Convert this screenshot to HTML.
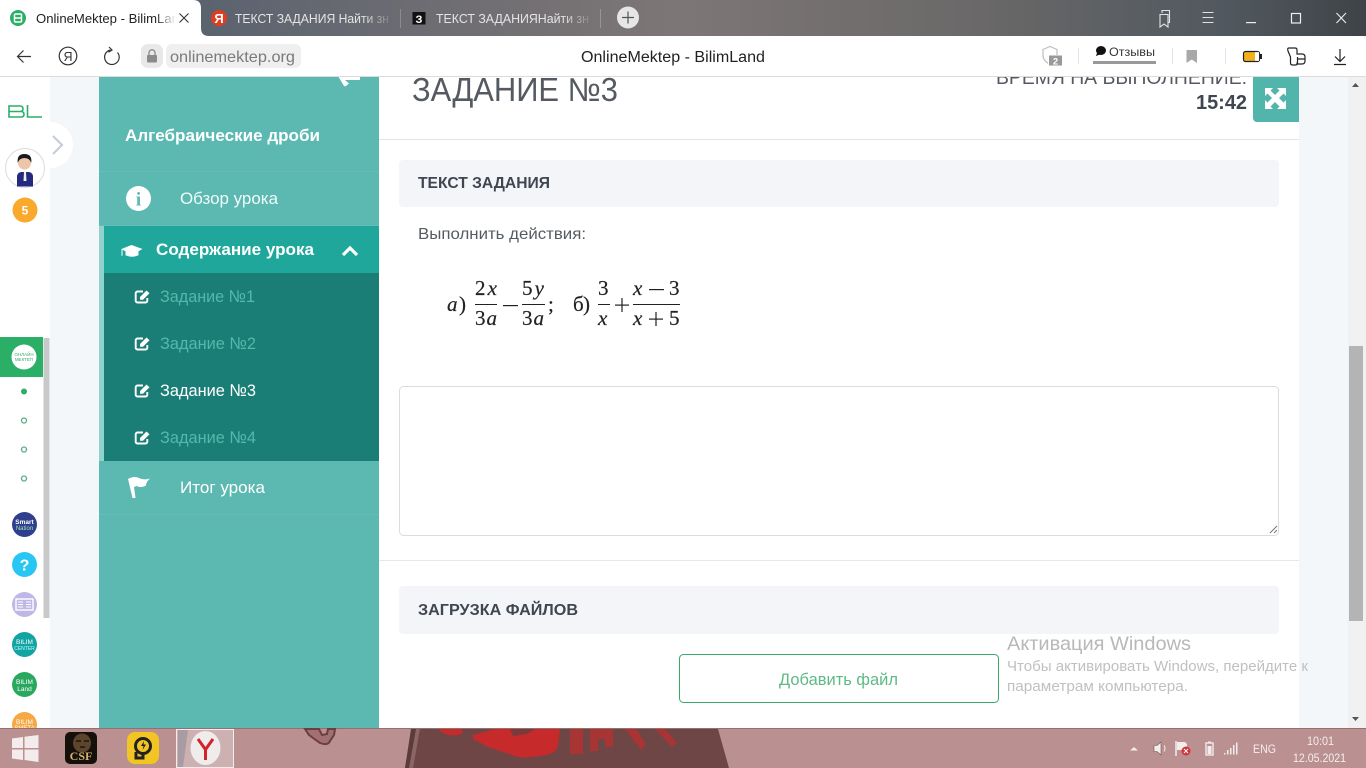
<!DOCTYPE html>
<html lang="ru">
<head>
<meta charset="utf-8">
<title>OnlineMektep - BilimLand</title>
<style>
html,body{margin:0;padding:0;width:1366px;height:768px;overflow:hidden;background:#fff}
svg{display:block;position:absolute;left:0;top:0}
text{font-family:"Liberation Sans","DejaVu Sans",sans-serif;white-space:pre}
.m text{font-family:"Liberation Serif","DejaVu Serif",serif;fill:#222;font-size:21px;stroke:#222;stroke-width:.2px}
.m .i{font-style:italic}
</style>
</head>
<body>
<svg width="1366" height="768" viewBox="0 0 1366 768" xmlns="http://www.w3.org/2000/svg">
<defs>
<linearGradient id="top" x1="0" x2="1" y1="0" y2="0">
<stop offset="0" stop-color="#4a5a6c"/><stop offset=".3" stop-color="#6c6c72"/><stop offset=".5" stop-color="#7d7676"/><stop offset=".72" stop-color="#6a6868"/><stop offset=".9" stop-color="#50585f"/><stop offset="1" stop-color="#3f4347"/>
</linearGradient>
<linearGradient id="ft0" gradientUnits="userSpaceOnUse" x1="155" x2="176" y1="0" y2="0"><stop offset="0" stop-color="#222"/><stop offset="1" stop-color="#222" stop-opacity="0"/></linearGradient>
<linearGradient id="ft1" gradientUnits="userSpaceOnUse" x1="362" x2="390" y1="0" y2="0"><stop offset="0" stop-color="#e4e4e4"/><stop offset="1" stop-color="#e4e4e4" stop-opacity=".15"/></linearGradient>
<linearGradient id="ft2" gradientUnits="userSpaceOnUse" x1="562" x2="590" y1="0" y2="0"><stop offset="0" stop-color="#e4e4e4"/><stop offset="1" stop-color="#e4e4e4" stop-opacity=".15"/></linearGradient>
<clipPath id="clipMain"><rect x="0" y="76" width="1366" height="652"/></clipPath>
<g id="edit">
<path d="M9 3H3.500A1.800 1.800 0 0 0 1.700 4.800v7.400A1.800 1.800 0 0 0 3.500 14h8a1.800 1.800 0 0 0 1.800-1.800V9.500" fill="none" stroke="currentColor" stroke-width="1.900"/>
<path d="M6 8.500L12.500 2l3 2.700L9 11.200H6z" fill="currentColor"/>
</g>
</defs>

<!-- page background -->
<rect width="1366" height="768" fill="#f4f7fa"/>

<g clip-path="url(#clipMain)">
<!-- left rail -->
<rect x="0" y="76" width="50" height="652" fill="#fff"/>
<circle cx="50" cy="145" r="23" fill="#fff"/>
<path d="M53 136l9 9-9 9" fill="none" stroke="#c6ced8" stroke-width="2.200"/>
<path d="M9 106h11q3 0 3 2.700t-3 2.800H9zM9 111.500h12q3 0 3 2.700t-3 2.800H9zM27.500 105v12h14.500" fill="none" stroke="#2bae66" stroke-width="1.600"/>
<circle cx="25" cy="168" r="19.500" fill="#fff" stroke="#dcdcdc"/>
<path d="M17 186.500v-10q0-3.500 4-4.500h8q4 1 4 4.500v10z" fill="#232a80"/>
<path d="M24 172h2l.5 9h-3z" fill="#eee"/>
<circle cx="24.500" cy="163" r="6.500" fill="#eec5a8"/>
<path d="M17.800 163q-1.300-9 6.700-9t6.700 9q-1.500-5-6.700-5t-6.700 5z" fill="#1a1a1f"/>
<circle cx="25" cy="210" r="12.500" fill="#f9a92c"/>
<text x="25" y="214.500" font-size="12" font-weight="700" fill="#fff" text-anchor="middle">5</text>
<rect x="0" y="337" width="43" height="40" fill="#2bae66"/>
<circle cx="24" cy="357" r="12.500" fill="#fff"/>
<text x="24" y="356" font-size="4.500" fill="#3aa76d" text-anchor="middle">ОНЛАЙН</text>
<text x="24" y="361" font-size="4.500" fill="#3aa76d" text-anchor="middle">МЕКТЕП</text>
<rect x="43.500" y="338" width="6" height="280" fill="#c9c9c9"/>
<circle cx="24" cy="391.500" r="3" fill="#2bae66"/>
<circle cx="24" cy="420.500" r="2.500" fill="none" stroke="#58ac84" stroke-width="1.300"/>
<circle cx="24" cy="449.500" r="2.500" fill="none" stroke="#58ac84" stroke-width="1.300"/>
<circle cx="24" cy="478.500" r="2.500" fill="none" stroke="#58ac84" stroke-width="1.300"/>
<circle cx="24.500" cy="524.500" r="12.500" fill="#2f3f8e"/>
<text x="24.500" y="524" font-size="6.500" font-weight="700" fill="#fff" text-anchor="middle">Smart</text>
<text x="24.500" y="530" font-size="6" fill="#9fe0b0" text-anchor="middle">Nation</text>
<circle cx="24.500" cy="564.500" r="12.500" fill="#28c6f2"/>
<text x="24.500" y="570.500" font-size="16" font-weight="700" fill="#fff" text-anchor="middle">?</text>
<circle cx="24.500" cy="604.500" r="12.500" fill="#bfb7e6"/>
<rect x="16" y="599" width="17" height="11" fill="none" stroke="#fff" stroke-width="1.400"/>
<path d="M18 602h5M18 604.500h5M18 607h5M26 602h5M26 604.500h5M26 607h5" stroke="#fff"/>
<circle cx="24.500" cy="644.500" r="12.500" fill="#12a3a3"/>
<text x="24.500" y="644" font-size="6.500" fill="#fff" text-anchor="middle">BILIM</text>
<text x="24.500" y="650" font-size="5" fill="#bff" text-anchor="middle">CENTER</text>
<circle cx="24.500" cy="684.500" r="12.500" fill="#2ba85f"/>
<text x="24.500" y="684" font-size="6.500" fill="#fff" text-anchor="middle">BILIM</text>
<text x="24.500" y="691" font-size="6.500" fill="#fff" text-anchor="middle">Land</text>
<circle cx="24.500" cy="724.500" r="12.500" fill="#f5a843"/>
<text x="24.500" y="724" font-size="6.500" fill="#fff" text-anchor="middle">BILIM</text>
<text x="24.500" y="730" font-size="6" fill="#fff" text-anchor="middle">SMETA</text>

<!-- sidebar -->
<rect x="99" y="76" width="280" height="652" fill="#5bb9b1"/>
<rect x="99" y="171" width="280" height="1" fill="#64bdb6"/>
<rect x="99" y="225" width="280" height="1" fill="#64bdb6"/>
<rect x="99" y="514" width="280" height="1" fill="#64bdb6"/>
<rect x="99" y="226" width="5" height="235" fill="#8fd2ce"/>
<rect x="104" y="226" width="275" height="47" fill="#20a79b"/>
<rect x="104" y="273" width="275" height="188" fill="#1b7e76"/>
<path d="M338 76h22v4h-15l4 3.500-3 2.500q-1 .5-2 0z" fill="#fff"/>
<text x="125" y="141" font-size="17" font-weight="700" fill="#fff" textLength="195" lengthAdjust="spacingAndGlyphs">Алгебраические дроби</text>
<circle cx="138.500" cy="198.500" r="12.500" fill="#fff"/>
<text x="138.500" y="205.500" font-size="19" font-weight="700" fill="#5bb9b1" text-anchor="middle" style="font-family:'Liberation Serif',serif">i</text>
<text x="180" y="204" font-size="17" fill="#f1fbfa" textLength="98" lengthAdjust="spacingAndGlyphs">Обзор урока</text>
<path d="M121.500 249l10-4 11 4-4 2.200v4q-7 3-13 0v-4l-3-1.500v6h-1z" fill="#fff"/>
<text x="156" y="255" font-size="17" font-weight="700" fill="#fff" textLength="158" lengthAdjust="spacingAndGlyphs">Содержание урока</text>
<path d="M343 255l7-7 7 7" fill="none" stroke="#fff" stroke-width="3.200"/>
<use href="#edit" x="134" y="288.500" style="color:#fff"/>
<text x="160" y="302" font-size="17" fill="#55b8ae" textLength="95" lengthAdjust="spacingAndGlyphs">Задание №1</text>
<use href="#edit" x="134" y="335.500" style="color:#fff"/>
<text x="160" y="349" font-size="17" fill="#55b8ae" textLength="96" lengthAdjust="spacingAndGlyphs">Задание №2</text>
<use href="#edit" x="134" y="382.500" style="color:#fff"/>
<text x="160" y="396" font-size="17" fill="#fff" textLength="96" lengthAdjust="spacingAndGlyphs">Задание №3</text>
<use href="#edit" x="134" y="429.500" style="color:#fff"/>
<text x="160" y="443" font-size="17" fill="#55b8ae" textLength="96" lengthAdjust="spacingAndGlyphs">Задание №4</text>
<path d="M128 479q6-3.500 11-1t11 .5q-4 3.500-4 7-5 3-9 .5l-3 1 1.500 11h-3z" fill="#fff"/>
<text x="180" y="493" font-size="17" fill="#fff" textLength="85" lengthAdjust="spacingAndGlyphs">Итог урока</text>

<!-- main panel -->
<rect x="379" y="76" width="920" height="652" fill="#fff"/>
<text x="412" y="101" font-size="33" fill="#555a62" textLength="206" lengthAdjust="spacingAndGlyphs">ЗАДАНИЕ №3</text>
<text x="996" y="84" font-size="20" fill="#555a62" textLength="251" lengthAdjust="spacingAndGlyphs">ВРЕМЯ НА ВЫПОЛНЕНИЕ:</text>
<text x="1196" y="109" font-size="20" font-weight="700" fill="#3f4650" textLength="51" lengthAdjust="spacingAndGlyphs">15:42</text>
<path d="M1253 76h46v46h-42a4 4 0 0 1-4-4z" fill="#52b5ab"/>
<path d="M1265 88h8l-2.500 2.500 4.500 4.500 4.500-4.500-2.500-2.500h9v8l-2.500-2.500-4.500 4.500 4.500 4.500 2.500-2.500v9h-9l2.500-2.500-4.500-4.500-4.500 4.500 2.500 2.500h-8v-9l2.500 2.500 4.500-4.500-4.500-4.500-2.500 2.500z" fill="#fff"/>
<rect x="379" y="139" width="920" height="1" fill="#e3e3e3"/>
<rect x="399" y="160" width="880" height="47" rx="4" fill="#f4f5f8"/>
<text x="418" y="188" font-size="15.500" font-weight="700" fill="#3f4650" textLength="132" lengthAdjust="spacingAndGlyphs">ТЕКСТ ЗАДАНИЯ</text>
<text x="418" y="239" font-size="16" fill="#555b62" textLength="168" lengthAdjust="spacingAndGlyphs">Выполнить действия:</text>

<!-- formula -->
<g class="m">
<text x="447" y="311" class="i">а</text><text x="459" y="311">)</text>
<text x="475" y="295" textLength="22">2<tspan class="i">x</tspan></text>
<rect x="475" y="304" width="22" height="1" fill="#222"/>
<text x="475" y="325" textLength="22">3<tspan class="i">a</tspan></text>
<rect x="503" y="305" width="15" height="1.200" fill="#222"/>
<text x="522" y="295" textLength="22">5<tspan class="i">y</tspan></text>
<rect x="522" y="304" width="23" height="1" fill="#222"/>
<text x="522" y="325" textLength="22">3<tspan class="i">a</tspan></text>
<text x="548" y="311">;</text>
<text x="573" y="311" textLength="17">б)</text>
<text x="598" y="295">3</text>
<rect x="598" y="304" width="12" height="1" fill="#222"/>
<text x="598" y="325" class="i">x</text>
<rect x="615" y="304.500" width="14" height="1.200" fill="#222"/><rect x="621.400" y="298" width="1.200" height="14" fill="#222"/>
<text x="633" y="295" class="i">x</text><rect x="649" y="289" width="15" height="1.200" fill="#222"/><text x="669" y="295">3</text>
<rect x="633" y="304" width="47" height="1" fill="#222"/>
<text x="633" y="325" class="i">x</text><rect x="649" y="318.500" width="14" height="1.200" fill="#222"/><rect x="655.400" y="312" width="1.200" height="14" fill="#222"/><text x="669" y="325">5</text>
</g>

<rect x="399.500" y="386.500" width="879" height="149" rx="4" fill="#fff" stroke="#dcdcdc"/>
<path d="M1270 533l7-7M1274 533l3-3" stroke="#777" stroke-width="1"/>
<rect x="379" y="560" width="920" height="1" fill="#e8e8e8"/>
<rect x="399" y="586" width="880" height="48" rx="4" fill="#f4f5f8"/>
<text x="418" y="615" font-size="15.500" font-weight="700" fill="#3f4650" textLength="160" lengthAdjust="spacingAndGlyphs">ЗАГРУЗКА ФАЙЛОВ</text>
<rect x="679.500" y="654.500" width="319" height="48" rx="4" fill="#fff" stroke="#3aa76d"/>
<text x="779" y="685" font-size="17" fill="#5fb985" textLength="119" lengthAdjust="spacingAndGlyphs">Добавить файл</text>

<!-- page scrollbar -->
<rect x="1348" y="76" width="18" height="652" fill="#f1f1f1"/>
<rect x="1349" y="346" width="14" height="275" fill="#b4b4b4"/>
<path d="M1355.500 83l-3.500 4h7z" fill="#555"/>
<path d="M1352 717h7l-3.500 4z" fill="#555"/>

<!-- windows watermark -->
<text x="1007" y="650" font-size="19.500" fill="#b8b8b8" textLength="184" lengthAdjust="spacingAndGlyphs">Активация Windows</text>
<text x="1007" y="671" font-size="14.500" fill="#c0c0c0" textLength="301" lengthAdjust="spacingAndGlyphs">Чтобы активировать Windows, перейдите к</text>
<text x="1007" y="691" font-size="14.500" fill="#c0c0c0" textLength="181" lengthAdjust="spacingAndGlyphs">параметрам компьютера.</text>
</g>

<!-- browser chrome -->
<rect x="0" y="0" width="1366" height="36" fill="url(#top)"/>
<path d="M0 0h193q8 0 8 8v20q0 8 8 8H0z" fill="#fff"/>
<circle cx="18" cy="18" r="8" fill="#2bae66"/>
<path d="M14.500 14h7M14.500 18h7M14.500 22h7M14.500 14v8M21.500 14v8" fill="none" stroke="#fff" stroke-width="1.500"/>
<text x="36" y="23" font-size="13" fill="url(#ft0)" textLength="140" lengthAdjust="spacingAndGlyphs">OnlineMektep - BilimLar</text>
<path d="M179.500 13.500l9 9M188.500 13.500l-9 9" stroke="#333" stroke-width="1.100"/>

<circle cx="219" cy="18" r="8" fill="#e03c1f"/>
<text x="219" y="23" font-size="13" font-weight="700" fill="#fff" text-anchor="middle">Я</text>
<text x="235" y="23" font-size="13" fill="url(#ft1)" textLength="154" lengthAdjust="spacingAndGlyphs">ТЕКСТ ЗАДАНИЯ Найти зн</text>
<rect x="400" y="9" width="1" height="19" fill="#8a8c92"/>
<path d="M412.500 12h13v12.500h-13z" fill="#111"/>
<text x="419" y="23" font-size="11" font-weight="700" fill="#fff" text-anchor="middle">З</text>
<text x="436" y="23" font-size="13" fill="url(#ft2)" textLength="153" lengthAdjust="spacingAndGlyphs">ТЕКСТ ЗАДАНИЯНайти зн</text>
<rect x="600" y="9" width="1" height="19" fill="#96949a"/>
<circle cx="628" cy="17.500" r="11" fill="#e6e6e6"/>
<path d="M628 11.500v12M622 17.500h12" stroke="#555" stroke-width="1.200"/>

<!-- window controls -->
<path d="M1160 12.500h8v12.500l-4-3-4 3zM1162 11v-2.500h7.500v12h-1.500" fill="none" stroke="#e2e2e2" stroke-width="1.100" transform="translate(0,2)"/>
<path d="M1202.500 12.500h11M1202.500 17.500h11M1202.500 22.500h11" stroke="#e2e2e2" stroke-width="1.100"/>
<rect x="1246" y="22" width="10" height="1.200" fill="#eee"/>
<rect x="1291.500" y="13.500" width="9" height="9.500" fill="none" stroke="#eee" stroke-width="1.200"/>
<path d="M1336.500 13l9.500 10M1346 13l-9.500 10" stroke="#eee" stroke-width="1.100"/>

<!-- toolbar -->
<path d="M0 36h1358q8 0 8 8v32H0z" fill="#fff"/>
<rect x="0" y="76" width="1366" height="1" fill="#dcdcdc"/>
<path d="M31 56.500H18M23.500 50.500l-6 6 6 6" fill="none" stroke="#333" stroke-width="1.200"/>
<circle cx="68" cy="56" r="8.800" fill="none" stroke="#333" stroke-width="1.200"/>
<text x="68" y="61" font-size="12.500" fill="#333" text-anchor="middle">Я</text>
<path d="M110.500 50a7.300 7.300 0 1 0 7 2.500M109 47l3 3-3.500 2.200" fill="none" stroke="#333" stroke-width="1.200"/>
<rect x="141" y="44" width="22" height="24" rx="7" fill="#e8e8e8"/>
<rect x="147" y="55" width="10" height="7.500" rx="1" fill="#8a8a8a"/>
<path d="M149 55v-2.200a3 3 0 0 1 6 0V55" fill="none" stroke="#8a8a8a" stroke-width="1.300"/>
<rect x="166" y="44" width="135" height="24" rx="6" fill="#efefef"/>
<text x="170" y="62" font-size="16" fill="#7a7a7a" textLength="125" lengthAdjust="spacingAndGlyphs">onlinemektep.org</text>
<text x="581" y="62" font-size="15.500" fill="#222" textLength="184" lengthAdjust="spacingAndGlyphs">OnlineMektep - BilimLand</text>

<path d="M1043 49.500l7-3 7 3v6q0 5-7 9-7-4-7-9z" fill="none" stroke="#bdbdbd" stroke-width="1.200"/>
<rect x="1048" y="55" width="15" height="11" fill="#fff"/>
<rect x="1049" y="55.500" width="13" height="10" fill="#999"/>
<text x="1055.500" y="64.500" font-size="9.500" font-weight="700" fill="#fff" text-anchor="middle">2</text>
<rect x="1078" y="48" width="1" height="16" fill="#e5e5e5"/>
<ellipse cx="1101" cy="50.500" rx="5" ry="4.500" fill="#111"/>
<path d="M1097 53l-1 3 4-1.500z" fill="#111"/>
<text x="1109" y="56" font-size="12" fill="#333" textLength="46" lengthAdjust="spacingAndGlyphs">Отзывы</text>
<rect x="1093" y="61" width="63" height="3" fill="#999"/>
<rect x="1172" y="48" width="1" height="16" fill="#e5e5e5"/>
<path d="M1186.500 50h10.500v13l-5.250-3.500-5.250 3.500z" fill="#a8a8a8"/>
<rect x="1225" y="48" width="1" height="16" fill="#e5e5e5"/>
<rect x="1243.500" y="51.500" width="16" height="10" rx="2" fill="#f2b01e" stroke="#222" stroke-width="1.200"/>
<rect x="1255" y="52.200" width="4" height="8.600" fill="#fff"/>
<rect x="1260" y="54" width="2" height="5" fill="#222"/>
<path d="M1289 48h6q2 0 2 2v4h5q3 0 3 3v4q0 3-3 3h-5v-1.500M1289 48q-2 0-1 3l2.500 6v6q0 2 2 2h3q2 0 2-2v-6M1297 59h8" fill="none" stroke="#222" stroke-width="1.200"/>
<path d="M1340 49v12M1335 56.500l5 5 5-5M1334 64.500h12" fill="none" stroke="#222" stroke-width="1.200"/>

<!-- taskbar -->
<rect x="0" y="728" width="1366" height="40" fill="#ba9090"/>
<rect x="0" y="728" width="1366" height="1" fill="#94706f"/>
<!-- wallpaper -->
<path d="M412 729h306l11 39H405z" fill="#6e4646"/>
<path d="M411 729h5l-6 39h-5z" fill="#5e3a3a"/>
<path d="M416 729h4l-7 39h-4z" fill="#8a6666"/>
<path d="M438 729h24q2 5-4 6-12 2-20-6zM473 735l22-6h65l-2 17q-2 7-12 9-14 3-28 2l-30-10-15-8z" fill="#c62a2a"/>
<path d="M510 729h25l-8 5-14 2z" fill="#7a3a3a"/>
<path d="M570 729h13v25h-13zM590 729h5l18 0v18h-8v-8h-7v12h-8zM625 729h11l10 15-5 6zM655 729h10l12 14-5 4z" fill="#a83434"/>
<path d="M305 729l4 6q4 3 11 8 8 3 10-2l4-6 1-6h-7l-1 5-5 1-3-6z" fill="#a27070" stroke="#6b3f3f" stroke-width="2"/>
<!-- windows logo -->
<path d="M12 738.500l11-1.500v11H12zM24.500 736.800L38.500 735v13h-14zM12 749.500h11v10.500l-11-1.500zM24.500 749.500h14V762l-14-2z" fill="#f4ecec"/>
<!-- CSF -->
<rect x="65" y="732" width="32" height="32" rx="5" fill="#15100c"/>
<ellipse cx="82" cy="743" rx="9" ry="9.500" fill="#5d452d"/>
<path d="M76 741h5M84 741h5M80 747h5" stroke="#1e140c" stroke-width="1.500"/>
<text x="81" y="760" font-size="12" font-weight="700" fill="#d4b070" text-anchor="middle" style="font-family:'Liberation Serif',serif">CSF</text>
<!-- yellow app -->
<rect x="127" y="732" width="32" height="32" rx="8" fill="#f2c522"/>
<circle cx="143" cy="746" r="7.500" fill="none" stroke="#222" stroke-width="3"/>
<path d="M136 752v6h7v-5" fill="none" stroke="#222" stroke-width="3"/>
<path d="M144 741l-3 5h2.500l-1 4 3.500-5.500h-2.500z" fill="#222"/>
<!-- yandex -->
<rect x="176.500" y="729.500" width="57" height="38" fill="#cdb0b2" stroke="#f2ecec"/>
<path d="M178 730h10l-5 37h-5z" fill="#a99ba3"/>
<ellipse cx="205.500" cy="748" rx="15" ry="17" fill="#f0ecec"/>
<path d="M198 739l7.500 10.500L213 739M205.500 749v11" fill="none" stroke="#d2222a" stroke-width="3"/>
<!-- tray -->
<path d="M1130 750.500l4-3.500 4 3.500z" fill="#f2ecec"/>
<path d="M1154 745.500h3l4-3.500v13l-4-3.500h-3z" fill="#f2ecec" stroke="#6d5555" stroke-width=".6"/>
<path d="M1164 745.500q2 3 0 6" fill="none" stroke="#f2ecec"/>
<path d="M1176 741v15" stroke="#f2ecec" stroke-width="1.500"/>
<path d="M1177 742h8l2 2v6h-10z" fill="#f2ecec"/>
<circle cx="1186" cy="751" r="4.500" fill="#d2363a"/>
<path d="M1184 749l4 4M1188 749l-4 4" stroke="#fff"/>
<rect x="1206" y="743" width="7" height="12" fill="none" stroke="#f2ecec" stroke-width="1.400"/>
<rect x="1208" y="741.500" width="3" height="1.500" fill="#f2ecec"/>
<rect x="1207.500" y="746" width="4" height="8" fill="#f2ecec"/>
<path d="M1224 753h1.500v1.500H1224zM1227 750h1.500v4.500H1227zM1230 748h1.500v6.500H1230zM1233 745h1.500v9.500H1233zM1236 742.500h1.500v12H1236z" fill="#f2ecec"/>
<text x="1253" y="753" font-size="12" fill="#f4eeee" textLength="23" lengthAdjust="spacingAndGlyphs">ENG</text>
<text x="1307" y="745" font-size="12" fill="#f4eeee" textLength="27" lengthAdjust="spacingAndGlyphs">10:01</text>
<text x="1293" y="762" font-size="11.500" fill="#f4eeee" textLength="53" lengthAdjust="spacingAndGlyphs">12.05.2021</text>
</svg>
</body>
</html>
